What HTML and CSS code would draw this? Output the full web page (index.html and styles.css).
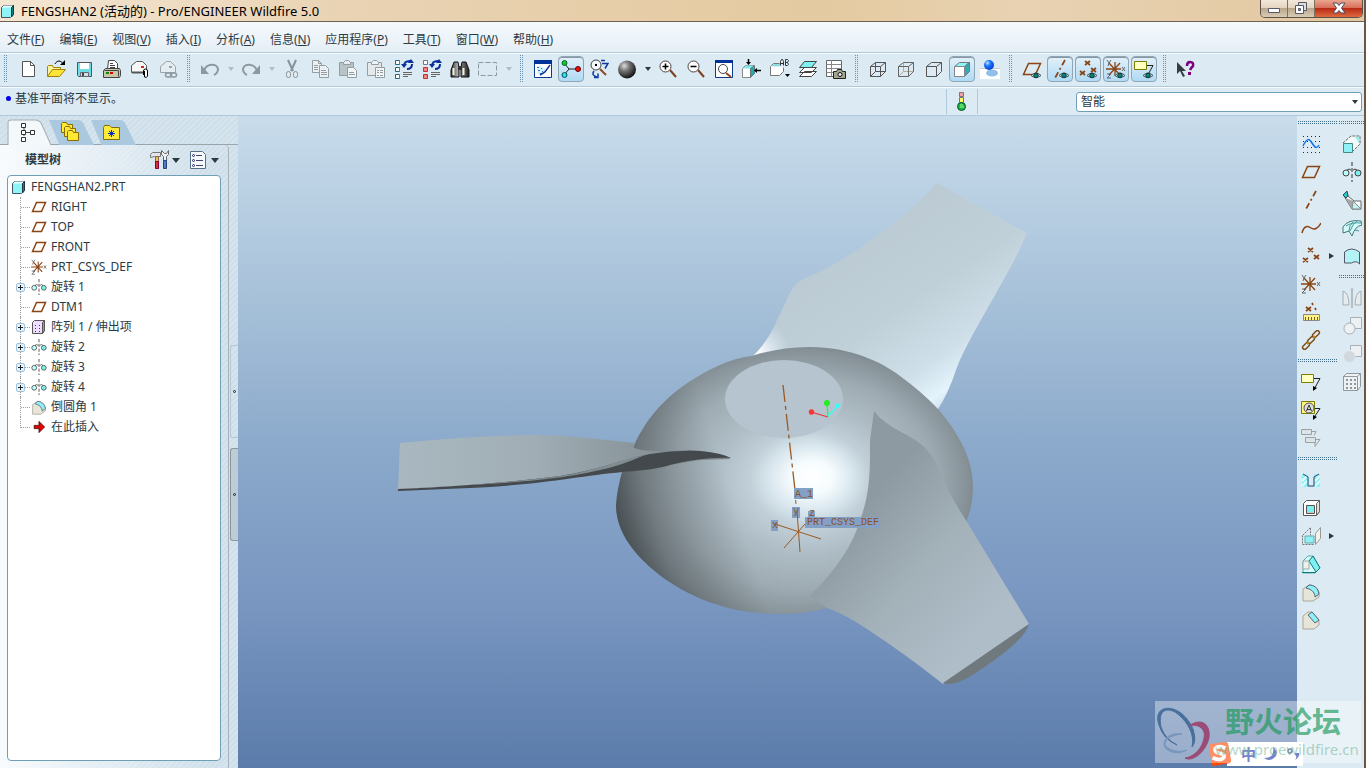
FILE: index.html
```html
<!DOCTYPE html>
<html lang="zh-CN">
<head>
<meta charset="utf-8">
<title>FENGSHAN2 (活动的) - Pro/ENGINEER Wildfire 5.0</title>
<link rel="stylesheet" href="styles.css">
</head>
<body>
<svg class="defs" width="0" height="0" aria-hidden="true">
<defs>
<linearGradient id="ball" x1="0" y1="0" x2="1" y2="0"><stop offset="0" stop-color="#333"/><stop offset=".35" stop-color="#aaa"/><stop offset="1" stop-color="#222"/></linearGradient>
<radialGradient id="sph" cx=".35" cy=".3" r=".7"><stop offset="0" stop-color="#ddd"/><stop offset=".4" stop-color="#777"/><stop offset="1" stop-color="#161616"/></radialGradient>
<radialGradient id="blueball" cx=".35" cy=".3" r=".7"><stop offset="0" stop-color="#cfe6ff"/><stop offset=".4" stop-color="#1f7bff"/><stop offset="1" stop-color="#0040d0"/></radialGradient>
<symbol id="cube" viewBox="0 0 16 16"><path d="M1.500 4.500l2-2h10v9l-3 3h-9z" fill="#8ff4f6" stroke="#456"/><path d="M2 4.500h9l2-2H4z" fill="#e9ffff"/><path d="M11.500 4.500v9.500l2-2.500v-9z" fill="#13888a" stroke="#234"/></symbol>
<symbol id="new" viewBox="0 0 20 20"><path d="M4.500 2.500h8l4 4v11h-12z" fill="#fff" stroke="#555"/><path d="M12.500 2.500v4h4" fill="none" stroke="#555"/></symbol>
<symbol id="open" viewBox="0 0 20 20"><path d="M1.500 17.500v-10l1-1h4l1 2h7v3" fill="#fdf39a" stroke="#a58100"/><path d="M1.500 17.500l5-7h13l-6 7z" fill="#ffe23a" stroke="#a58100"/><path d="M9 5c2-4 6-4 8 0" fill="none" stroke="#000"/><path d="M19 1v5h-5z"/></symbol>
<symbol id="save" viewBox="0 0 20 20"><path d="M3.500 3.500h14v14h-13l-1-1z" fill="#6fdde6" stroke="#555"/><path d="M6 4h9v6H6z" fill="#fff"/><path d="M6.500 13.500h8v4h-8z" fill="#d4dde0" stroke="#667"/><path d="M8 14h2v3H8z" fill="#444"/></symbol>
<symbol id="print" viewBox="0 0 20 20"><path d="M5.500 10.500l1-9h6l3 3v6z" fill="#fff" stroke="#444"/><path d="M8 4.500h3M8 6.500h5M8 8.500h5" stroke="#444"/><path d="M1.500 11.500l2-2h14l1 2v5l-1 2h-16z" fill="#c7c6a6" stroke="#444"/><path d="M2.500 11.500h14v6" fill="none" stroke="#444"/><path d="M4 13h3v2H4z" fill="#0a8a0a"/><path d="M8 13h3v2H8z" fill="#d00"/></symbol>
<symbol id="mail" viewBox="0 0 20 20"><path d="M1.500 13.500v-7l5-4h6l4 4v7z" fill="#f8f8f6" stroke="#555"/><path d="M2 13.500h13" stroke="#555" stroke-width="2"/><path d="M11 7h3v2h-3z" fill="#d22"/><path d="M13.500 16v-4a2 2 0 0 1 4 0v5a2 2 0 0 1-3 1l0-6" fill="#fff" stroke="#000"/></symbol>
<symbol id="maillink" viewBox="0 0 20 20"><path d="M2.500 13.500v-6l6-5h4l5 5v6z" fill="#e6edf1" stroke="#98a4aa"/><path d="M11 7h3v2h-3z" fill="#98a4aa"/><g fill="none" stroke="#8f999e" stroke-width="1.500"><rect x="7.500" y="14" width="6" height="4" rx="2"/><rect x="12.500" y="14" width="6" height="4" rx="2"/></g></symbol>
<symbol id="undo" viewBox="0 0 20 20"><path d="M4 12C6 4 17 4 18 10c0 3-2 5-4 6" fill="none" stroke="#8d999f" stroke-width="2"/><path d="M1 6v9h8z" fill="#8d999f"/></symbol>
<symbol id="redo" viewBox="0 0 20 20"><path d="M16 12C14 4 3 4 2 10c0 3 2 5 4 6" fill="none" stroke="#8d999f" stroke-width="2"/><path d="M19 6v9h-8z" fill="#8d999f"/></symbol>
<symbol id="cut" viewBox="0 0 20 20"><path d="M6 1l5 11M14 1L9 12" stroke="#87929a" stroke-width="2" fill="none"/><g fill="#e5eaec" stroke="#87929a"><rect x="4.500" y="12.500" width="4" height="6" rx="2"/><rect x="11.500" y="12.500" width="4" height="6" rx="2"/></g></symbol>
<symbol id="copy" viewBox="0 0 20 20"><g fill="#eaf0f3" stroke="#939da2"><path d="M2.500 1.500h6l3 3v9h-9zM8.500 1.500v3h3"/><path d="M9.500 6.500h6l3 3v9h-9z"/></g><path d="M4 6.500h4M4 8.500h4M4 10.500h4M11 11.500h5M11 13.500h6M11 15.500h6" stroke="#939da2"/></symbol>
<symbol id="paste" viewBox="0 0 20 20"><path d="M1.500 3.500h14v13h-14z" fill="#b8c3c8" stroke="#939da2"/><path d="M5.500 5.500v-2l2-2h3l2 2v2z" fill="#e6ecef" stroke="#939da2"/><path d="M9.500 8.500h6l3 3v7h-9z" fill="#f2f5f6" stroke="#939da2"/><path d="M11 13.500h5M11 15.500h6" stroke="#939da2"/></symbol>
<symbol id="pastesp" viewBox="0 0 20 20"><path d="M1.500 3.500h14v13h-14z" fill="#e4e9ec" stroke="#939da2"/><path d="M5.500 5.500v-2l2-2h3l2 2v2z" fill="#f0f4f5" stroke="#939da2"/><path d="M9.500 8.500h9v10h-9z" fill="#f2f5f6" stroke="#939da2"/><path d="M11 11.500h2M14 11.500h3M11 13.500h2M14 13.500h3M11 16.500h2M14 16.500h3" stroke="#939da2"/></symbol>
<symbol id="regen" viewBox="0 0 20 20"><path d="M1.500 1.500h4v4h-4zM1.500 8.500h4v4h-4zM1.500 15.500h4v4h-4z" fill="#fff" stroke="#267"/><path d="M5.500 2v3M5.500 9v3M5.500 16v3" stroke="#0aa"/><path d="M10 7c0-4 3-5 6-5M18 5c0 4-3 5-5 5" fill="none" stroke="#0a2f9e" stroke-width="2"/><path d="M7 5h6l-3 4zM14 4h6l-3-4z" fill="#0a2f9e"/><path d="M9 13.500h9M9 15.500h9M9 17.500h5" stroke="#666"/></symbol>
<symbol id="regen2" viewBox="0 0 20 20"><path d="M1.500 1.500h4v4h-4z" fill="#fff" stroke="#777"/><path d="M1.500 8.500h4v4h-4zM1.500 15.500h4v4h-4z" fill="#ff8080" stroke="#b33"/><path d="M10 7c0-4 3-5 6-5M18 5c0 4-3 5-5 5" fill="none" stroke="#0a2f9e" stroke-width="2"/><path d="M7 5h6l-3 4zM14 4h6l-3-4z" fill="#0a2f9e"/><path d="M9 13.500h9M9 15.500h9M9 17.500h5" stroke="#666"/></symbol>
<symbol id="find" viewBox="0 0 20 20"><path d="M4 3h4l1 6v9H1v-7zM12 3h4l3 8v7h-8V9z" fill="url(#ball)" stroke="#111"/><path d="M8 7h4v4H8z" fill="#333"/><path d="M3.500 9v7M13.500 9v7" stroke="#f4f4d8" stroke-width="2"/></symbol>
<symbol id="marquee" viewBox="0 0 20 20"><path d="M.5 3.500h18v13H.5z" fill="none" stroke="#8d999f" stroke-dasharray="5 2"/></symbol>
<symbol id="repaint" viewBox="0 0 20 20"><path d="M1.500 1.500h17v17h-17z" fill="#fff" stroke="#0b3a8c"/><path d="M1 1h18v4H1z" fill="#003399"/><path d="M4 7c4 0 8 1 9 5l-3 4-6-1z" fill="#d4f2fa"/><path d="M4 8.500h2M8 9.500h1M5 11.500h2M7 14.500h2M9 12.500h1" stroke="#2a6fd0"/><path d="M17 6l-5 7-5 3" stroke="#113c9c" stroke-width="1.500" fill="none"/></symbol>
<symbol id="spin" viewBox="0 0 20 20"><path d="M3 4l5 6-5 6M8 10h10" fill="none" stroke="#222"/><circle cx="3.500" cy="4" r="2.500" fill="#19c819" stroke="#064"/><circle cx="3.500" cy="16" r="2.500" fill="#2ee0ee" stroke="#055"/><circle cx="17" cy="10" r="2.500" fill="#e11" stroke="#600"/></symbol>
<symbol id="orient" viewBox="0 0 20 20"><path d="M11 10l6 6" stroke="#8b4a20" stroke-width="2"/><circle cx="7" cy="6" r="5" fill="#f3f8fa" stroke="#444"/><path d="M6 5h2v2H6z"/><path d="M12 1.500h4M13 4.500h6l-3 5M5 12c-2 3-1 5 3 6M5 18.500h4v-4" fill="none" stroke="#103a9e" stroke-width="1.500"/></symbol>
<symbol id="shade" viewBox="0 0 20 20"><circle cx="10" cy="10.500" r="9" fill="url(#sph)"/></symbol>
<symbol id="zin" viewBox="0 0 20 20"><path d="M12 11l6 7" stroke="#7e3f1c" stroke-width="2"/><circle cx="7.500" cy="7.500" r="5.500" fill="#fff" stroke="#444"/><path d="M7.500 4.500v6M4.500 7.500h6" stroke="#000" stroke-width="1.500"/></symbol>
<symbol id="zout" viewBox="0 0 20 20"><path d="M12 11l6 7" stroke="#7e3f1c" stroke-width="2"/><circle cx="7.500" cy="7.500" r="5.500" fill="#fff" stroke="#444"/><path d="M4.500 7.500h6" stroke="#000" stroke-width="1.500"/></symbol>
<symbol id="refit" viewBox="0 0 20 20"><path d="M1.500 1.500h17v17h-17z" fill="#fff" stroke="#0b3a8c"/><path d="M1 1h18v3H1z" fill="#003399"/><circle cx="9" cy="10" r="4.500" fill="#fff" stroke="#444"/><path d="M12 14l5 4" stroke="#8b4a20" stroke-width="2"/></symbol>
<symbol id="normal" viewBox="0 0 20 20"><path d="M.5 9.500l3-3h8v8l-3 4h-8z" fill="#fff" stroke="#888"/><path d="M1 9.500h8l2-3H4z" fill="#7ceaea"/><path d="M8.500 9.500v9l4-4v-8z" fill="#2aa" stroke="#677"/><path d="M6.500 0v5M19 11.500h-6" stroke="#000" stroke-width="1.500"/><path d="M4 3h5l-2.500 3zM15 9v5l-3-2.500z"/></symbol>
<symbol id="views" viewBox="0 0 20 20"><path d="M.5 7.500l3-3h6M.5 7.500v9h9l4-4v-4" fill="#fff" stroke="#777"/><path d="M1 7h8l2-2H4z" fill="#8dd"/><path d="M10.500 6.500v-4l1-2h1l1 2v4M11 4.500h2M15.500.5v6h2l1-1-1-2h-2M15.500.5h2l1 1-1 2" fill="none" stroke="#333"/><path d="M15 15h5l-2.500 3z"/></symbol>
<symbol id="layers" viewBox="0 0 20 20"><g stroke="#444" fill="#fff"><path d="M1.500 17.500l5-5h12l-5 5zM1.500 13.500l5-5h12l-5 5z"/><path d="M1.500 8.500l5-6h12l-5 6z" fill="#7ff0f0"/></g></symbol>
<symbol id="viewmgr" viewBox="0 0 20 20"><path d="M.5 1.500h15v16H.5z" fill="#fff" stroke="#666"/><path d="M.5 5.500h15M.5 9.500h15M.5 13.500h15M5.500 1v16" stroke="#888"/><path d="M7.500 12.500h3l1-2h4l1 2h3v7h-12z" fill="#a4a493" stroke="#222"/><circle cx="14" cy="15.500" r="2" fill="#eee" stroke="#111"/></symbol>
<symbol id="wire" viewBox="0 0 20 20"><path d="M2.500 7.500h10v10h-10zM7.500 3.500h10v9h-10zM2.500 7.500l5-4M12.500 7.500l5-4M12.500 17.500l5-5M2.500 17.500l5-5" fill="none" stroke="#555"/></symbol>
<symbol id="hidden" viewBox="0 0 20 20"><path d="M7.500 3.500v9h10M2.500 17.500l5-5" fill="none" stroke="#b5aca0"/><path d="M2.500 7.500h10v10h-10zM2.500 7.500l5-4h10v9l-5 5M12.500 7.500l5-4" fill="none" stroke="#666"/></symbol>
<symbol id="nohidden" viewBox="0 0 20 20"><path d="M2.500 7.500h10v10h-10zM2.500 7.500l5-4h10v9l-5 5M12.500 7.500l5-4" fill="none" stroke="#555"/></symbol>
<symbol id="shaded" viewBox="0 0 20 20"><path d="M2.500 7.500l5-4h10l-5 4z" fill="#8df5f5" stroke="#777"/><path d="M12.500 7.500l5-4v9l-5 5z" fill="#3aa9ad" stroke="#678"/><path d="M2.500 7.500h10v10h-10z" fill="#fff" stroke="#888"/></symbol>
<symbol id="enhanced" viewBox="0 0 20 20"><path d="M0 9h20v11H0z" fill="#fff"/><path d="M0 9.500h20" stroke="#ccc"/><ellipse cx="12" cy="14" rx="6" ry="3.500" fill="#8fbfe8"/><circle cx="9" cy="6" r="5" fill="url(#blueball)"/></symbol>
<symbol id="eye" viewBox="0 0 20 20"><path d="M9 16.500q5-5 10 0-5 4-10 0z" fill="#d5eef0" stroke="#455"/><circle cx="14" cy="16.500" r="2.300" fill="#078080" stroke="#133"/></symbol>
<symbol id="plane" viewBox="0 0 20 20"><path d="M6.500 4.500h12l-5 11h-12z" fill="none" stroke="#8a4413" stroke-width="1.500"/></symbol>
<symbol id="planes" viewBox="0 0 16 16"><path d="M5.500 3.500h9l-4 9h-9z" fill="none" stroke="#8a4413" stroke-width="1.500"/></symbol>
<symbol id="axis" viewBox="0 0 20 20"><path d="M15 1L5 19" stroke="#8a4413" stroke-width="1.700" stroke-dasharray="6 3 2 3"/></symbol>
<symbol id="points" viewBox="0 0 20 20"><path d="M7 2l5 4M12 2L7 6M2 12l5 4M7 12l-5 4M13 9l5 4M18 9l-5 4" stroke="#8a4413" stroke-width="1.700"/></symbol>
<symbol id="csys" viewBox="0 0 20 20"><path d="M9 3v14M0 10h15M3 4l11 12M14 4L3 16" stroke="#8a4413" stroke-width="1.300"/><path d="M1 1l2 3 2-3M3 4l-1 3M16 8l3 4M19 8l-3 4M1 15h4l-4 4h4" fill="none" stroke="#666"/></symbol>
<symbol id="note" viewBox="0 0 20 20"><path d="M.5 2.500h12v8H.5z" fill="#ffffc0" stroke="#7d7d00"/><path d="M13 6.500h6l-6 11" fill="none" stroke="#222"/><path d="M12 14v5l4-3z"/></symbol>
<symbol id="help" viewBox="0 0 20 20"><path d="M1 3v12l3-3 3 6 2-1-3-5h4z" fill="#333c41"/><path d="M11 7q0-4 3-4 4 0 3 4-2 2-3 4" fill="none" stroke="#800080" stroke-width="2.500"/><path d="M12 13h3v3h-3z" fill="#800080"/></symbol>
<symbol id="light" viewBox="0 0 20 20"><path d="M7.500.5h4v4h-4z" fill="#f3a0a0" stroke="#777"/><path d="M7.500 5.500h4v5h-4z" fill="#fff46a" stroke="#777"/><circle cx="9.500" cy="14.500" r="4" fill="#21b53c" stroke="#053"/><path d="M8 13h3M8 15h4" stroke="#9f9"/></symbol>
<symbol id="treetab" viewBox="0 0 20 20"><path d="M6 6v8M4 10.500h8" stroke="#444"/><g fill="#fff" stroke="#333"><path d="M3.500 1.500h4v4h-4zM3.500 8.500h4v4h-4zM3.500 15.500h4v4h-4zM12.500 8.500h4v4h-4z"/></g></symbol>
<symbol id="folders" viewBox="0 0 20 20"><g fill="#ffe933" stroke="#8a6d00"><path d="M1.500 10.500v-9l1-1h4l1 2h5v8z"/><path d="M4.500 14.500v-9l1-1h4l1 2h5v8z"/><path d="M7.500 18.500v-9l1-1h4l1 2h5v8z"/></g></symbol>
<symbol id="favs" viewBox="0 0 20 20"><path d="M1.500 17.500v-12l1-2h5l2 2h8v12z" fill="#ffea3c" stroke="#8a6d00"/><path d="M9.500 8v7M6 11.500h7M7 9l5 5M12 9l-5 5" stroke="#0a2fae"/></symbol>
<symbol id="tools" viewBox="0 0 20 20"><path d="M1.500 7.500v-3l2-2h8v4h-6z" fill="#dfe5e8" stroke="#777"/><path d="M6.500 6.500h3v6h-3z" fill="#e8c060" stroke="#864"/><path d="M6.500 11.500h3v7h-3z" fill="#d03434" stroke="#803"/><path d="M12.500.5v4l2 2v4h3v-4l2-2v-4l-2 3h-2z" fill="#eef2f4" stroke="#666"/><path d="M14.500 10.500h3v8h-3z" fill="#4d77cc" stroke="#247"/></symbol>
<symbol id="settings" viewBox="0 0 20 20"><path d="M2.500 1.500h12l3 3v14h-15z" fill="#f5faff" stroke="#55718a"/><path d="M8 5.500h6M8 10.500h7M8 15.500h7" stroke="#446"/><g fill="#fff" stroke="#226"><circle cx="5.500" cy="5.500" r="1"/><circle cx="5.500" cy="10.500" r="1"/><circle cx="5.500" cy="15.500" r="1"/></g></symbol>
<symbol id="revolve" viewBox="0 0 20 20"><path d="M10 0v20" stroke="#333" stroke-dasharray="4 2"/><circle cx="4" cy="11" r="3" fill="#bff" stroke="#444"/><circle cx="16" cy="11" r="3" fill="#7ff0f0" stroke="#444"/><path d="M5 8q2-2 4 0M11 8q2-2 4 0" fill="none" stroke="#444"/></symbol>
<symbol id="pattern" viewBox="0 0 16 16"><path d="M1.500 3.500l2-2h10v10l-2 3h-10z" fill="#efdcff" stroke="#555"/><path d="M11.500 3.500v11l2-3v-10z" fill="#b583d8" stroke="#555"/><path d="M4 6h1v1H4zM8 6h1v1H8zM4 9h1v1H4zM8 9h1v1H8zM4 12h1v1H4zM8 12h1v1H8z" fill="#80c"/></symbol>
<symbol id="round" viewBox="0 0 20 20"><path d="M2 7l6-4c5 0 9 3 10 8v4l-6 4H2z" fill="#e7e4d8" stroke="#aaa79b"/><path d="M8 3c5 0 9 3 10 9l-4 3c0-4-3-7-6-8l-3-1z" fill="#8ff0f5" stroke="#567"/></symbol>
<symbol id="chamfer" viewBox="0 0 20 20"><path d="M2 6l5-4h4l7 8v5l-5 4H2z" fill="#e7e4d8" stroke="#aaa79b"/><path d="M11 2l7 8-4 3-7-8z" fill="#8ff0f5" stroke="#567"/></symbol>
<symbol id="insert" viewBox="0 0 20 20"><path d="M4 8h6V3l7 7-7 7v-5H4z" fill="#e60000" stroke="#400"/></symbol>
<symbol id="sketch" viewBox="0 0 20 20"><path d="M2 2.500h18M2 7.500h18M2 13.500h18M2 18.500h18" stroke="#225" stroke-dasharray="1 3"/><path d="M2 12c4-8 6-8 9-3s5 6 7 2" fill="none" stroke="#1275e8" stroke-width="1.500"/></symbol>
<symbol id="curve" viewBox="0 0 20 20"><path d="M1 15c2-8 6-7 9-5s7 1 10-5" fill="none" stroke="#8a4413" stroke-width="1.500"/></symbol>
<symbol id="ruler" viewBox="0 0 20 20"><path d="M5 5l5 4M10 5L5 9M11 1l1 2M14 6l1 2" stroke="#8a4413" stroke-width="1.700"/><path d="M2.500 12.500h16v6h-16z" fill="#fff08a" stroke="#888"/><path d="M4.500 18v-3M7.500 18v-3M10.500 18v-3M13.500 18v-3M16.500 18v-3" stroke="#776600"/></symbol>
<symbol id="chain" viewBox="0 0 20 20"><g fill="none" stroke="#7a4a12" stroke-width="1.400"><rect x="13" y="0" width="4" height="8" rx="2" transform="rotate(45 15 4)"/><rect x="8" y="6" width="4" height="8" rx="2" transform="rotate(45 10 10)"/><rect x="3" y="12" width="4" height="8" rx="2" transform="rotate(45 5 16)"/></g><path d="M14 6l-2 2M8 12l-2 2" stroke="#b98a30" stroke-width="2"/></symbol>
<symbol id="note2" viewBox="0 0 20 20"><path d="M.5 1.500h13v12H.5z" fill="#fff27a" stroke="#7d7d00"/><circle cx="8" cy="8" r="5" fill="#ddd" stroke="#555"/><path d="M5.500 11l2.500-6 2.500 6M6 9.500h4" fill="none" stroke="#333"/><path d="M14 8.500h5l-6 9" fill="none" stroke="#222"/><path d="M12 15v5l4-3z"/></symbol>
<symbol id="note3" viewBox="0 0 20 20"><g fill="#dde4e8" stroke="#98a2a7"><path d="M.5 1.500h10v5H.5zM4.500 9.500h10v5h-10z"/><path d="M11 3.500h4l-2 4M15 11.500h4l-5 7v-4" fill="none"/></g></symbol>
<symbol id="hole" viewBox="0 0 20 20"><path d="M1 4h5l2 3v9h4V7l2-3h5v13H1z" fill="#8ff0f5"/><path d="M1 16l5-5M1 11l5-5M14 16l5-5M14 11l5-5" stroke="#dffcff" stroke-width="2"/><path d="M2 4l5 3v9h6V7l5-3" fill="none" stroke="#446"/></symbol>
<symbol id="shell" viewBox="0 0 20 20"><path d="M2.500 5.500l3-3h13v11l-3 4h-13z" fill="#fff" stroke="#555"/><path d="M15.500 5.500v12l3-4v-11z" fill="#e4dfd3" stroke="#666"/><path d="M5.500 7.500h8v8h-8z" fill="#cfc8bb" stroke="#555"/><path d="M7 8h6v6H7z" fill="#7ff0f0"/></symbol>
<symbol id="rib" viewBox="0 0 20 20"><path d="M14.500 18.500v-11l5-6v11z" fill="#f4f1e8" stroke="#999"/><path d="M1.500 9.500l8-8v8M1.500 9.500v9h12" fill="none" stroke="#777" stroke-dasharray="2 1"/><path d="M4 10h9v7H4z" fill="#8ff0f5" stroke="#6aa"/></symbol>
<symbol id="draft" viewBox="0 0 20 20"><path d="M2 7l5-5h5l7 12-5 5H2z" fill="#d9fafa" stroke="#5aa"/><path d="M12 2l7 12-4 4-7-11z" fill="#7ff0f4" stroke="#177"/><path d="M2 7h6v8H2z" fill="#eef0ea" stroke="#9aa"/><path d="M1 18.500h14" stroke="#177"/></symbol>
<symbol id="extrude" viewBox="0 0 20 20"><path d="M1 9l8-7h9v8l-8 8" fill="#f3fafa" stroke="#666" stroke-dasharray="3 1"/><path d="M13 3h4v6z" fill="#9ee"/><path d="M1.500 9.500h9v9h-9z" fill="#8ff0f5" stroke="#488"/></symbol>
<symbol id="sweep" viewBox="0 0 20 20"><path d="M5 2l1 4 6 5h7v8h-9L2 6z" fill="#fafaf8" stroke="#666"/><path d="M1 5l4-4 1 5-2 2z" fill="#2bc4c8" stroke="#255"/><path d="M4 8l7 3-1 8z" fill="#a8a8a8"/><path d="M11 11l8 8h-9z" fill="#bff3f3" stroke="#888"/></symbol>
<symbol id="boundary" viewBox="0 0 20 20"><path d="M1 9Q6 1 19 3l1 4q-7 1-10 11l-3-5-6 2z" fill="#d5fafa" stroke="#477"/><path d="M4 8q6-4 15-3M8 13q3-8 7-10M13 12l4 1M11 4q-4 3-4 9" fill="none" stroke="#499"/></symbol>
<symbol id="style" viewBox="0 0 20 20"><path d="M2.500 6q7-6 15 0v12q-3-4-8-1h-7z" fill="#b4f3f5" stroke="#556"/></symbol>
<symbol id="mirror" viewBox="0 0 20 20"><path d="M1 3q6 2 6 14H1zM19 3q-6 2-6 14h6z" fill="#e5ebee" stroke="#a5afb4"/><path d="M10 0v20" stroke="#a5afb4" stroke-width="1.500"/></symbol>
<symbol id="merge" viewBox="0 0 20 20"><path d="M8.500 1.500h11v11h-11z" fill="#edf1f3" stroke="#a5afb4"/><circle cx="7.500" cy="12.500" r="5.500" fill="#edf1f3" stroke="#a5afb4"/></symbol>
<symbol id="trim" viewBox="0 0 20 20"><path d="M8.500 6v-4.500h11v11h-6" fill="#edf1f3" stroke="#a5afb4"/><circle cx="7.500" cy="12.500" r="5.500" fill="#d2d9dd"/></symbol>
<symbol id="array" viewBox="0 0 20 20"><path d="M1.500 4.500l3-3h14v13l-3 4h-14z" fill="#eef1f3" stroke="#8f999e"/><path d="M15.500 4.500v14M15.500 4.500l3-3M1.500 4.500h14" stroke="#8f999e"/><path d="M4 8h10M4 12h10M4 16h10" stroke="#8f999e" stroke-width="2" stroke-dasharray="2 2"/></symbol>
</defs>
</svg>
<div class="window">
<header class="titlebar">
<svg class="ic"><use href="#cube"/></svg>
<h1>FENGSHAN2 (活动的) - Pro/ENGINEER Wildfire 5.0</h1>
<div class="winbtns">
<button aria-label="最小化"><svg viewBox="0 0 16 14"><path d="M2.500 7.500h11v4h-11z" fill="#fff" stroke="#555869"/></svg></button>
<button aria-label="还原"><svg viewBox="0 0 16 14"><path d="M5.500 1.500h8v8h-8z" fill="#ddd" stroke="#555869"/><path d="M2.500 4.500h8v8h-8z" fill="#fff" stroke="#555869"/><path d="M5.500 7.500h2v2h-2z" fill="#999" stroke="#555869"/></svg></button>
<button class="close" aria-label="关闭"><svg viewBox="0 0 16 14"><path d="M2 2h4l2 2.500L10 2h4l-3.500 5 3.500 5h-4L8 9.500 6 12H2l3.500-5z" fill="#fff" stroke="#4a4a5c"/></svg></button>
</div>
</header>
<nav class="menu">
<button>文件(<u>F</u>)</button><button>编辑(<u>E</u>)</button><button>视图(<u>V</u>)</button><button>插入(<u>I</u>)</button><button>分析(<u>A</u>)</button><button>信息(<u>N</u>)</button><button>应用程序(<u>P</u>)</button><button>工具(<u>T</u>)</button><button>窗口(<u>W</u>)</button><button>帮助(<u>H</u>)</button>
</nav>
<div class="toolbar">
<i class="grip"></i>
<button aria-label="新建"><svg class="ic"><use href="#new"/></svg></button>
<button aria-label="打开"><svg class="ic"><use href="#open"/></svg></button>
<button aria-label="保存"><svg class="ic"><use href="#save"/></svg></button>
<button aria-label="打印"><svg class="ic"><use href="#print"/></svg></button>
<button aria-label="邮件"><svg class="ic"><use href="#mail"/></svg></button>
<button aria-label="邮件链接"><svg class="ic"><use href="#maillink"/></svg></button>
<i class="grip"></i>
<button aria-label="撤销"><svg class="ic"><use href="#undo"/></svg></button>
<button class="drop off" aria-label="撤销列表"></button>
<button aria-label="重做"><svg class="ic"><use href="#redo"/></svg></button>
<button class="drop off" aria-label="重做列表"></button>
<button aria-label="剪切"><svg class="ic"><use href="#cut"/></svg></button>
<button aria-label="复制"><svg class="ic"><use href="#copy"/></svg></button>
<button aria-label="粘贴"><svg class="ic"><use href="#paste"/></svg></button>
<button aria-label="选择性粘贴"><svg class="ic"><use href="#pastesp"/></svg></button>
<button aria-label="再生"><svg class="ic"><use href="#regen"/></svg></button>
<button aria-label="再生管理器"><svg class="ic"><use href="#regen2"/></svg></button>
<button aria-label="查找"><svg class="ic"><use href="#find"/></svg></button>
<button aria-label="框选"><svg class="ic"><use href="#marquee"/></svg></button>
<button class="drop off" aria-label="框选列表"></button>
<i class="grip"></i>
<button aria-label="重画"><svg class="ic"><use href="#repaint"/></svg></button>
<button class="on" aria-label="旋转中心"><svg class="ic"><use href="#spin"/></svg></button>
<button aria-label="定向模式"><svg class="ic"><use href="#orient"/></svg></button>
<button aria-label="外观库"><svg class="ic"><use href="#shade"/></svg></button>
<button class="drop" aria-label="外观列表"></button>
<button aria-label="放大"><svg class="ic"><use href="#zin"/></svg></button>
<button aria-label="缩小"><svg class="ic"><use href="#zout"/></svg></button>
<button aria-label="重新调整"><svg class="ic"><use href="#refit"/></svg></button>
<button aria-label="重定向"><svg class="ic"><use href="#normal"/></svg></button>
<button aria-label="视图列表"><svg class="ic"><use href="#views"/></svg></button>
<button aria-label="层"><svg class="ic"><use href="#layers"/></svg></button>
<button aria-label="视图管理器"><svg class="ic"><use href="#viewmgr"/></svg></button>
<i class="grip"></i>
<button aria-label="线框"><svg class="ic"><use href="#wire"/></svg></button>
<button aria-label="隐藏线"><svg class="ic"><use href="#hidden"/></svg></button>
<button aria-label="无隐藏线"><svg class="ic"><use href="#nohidden"/></svg></button>
<button class="on" aria-label="着色"><svg class="ic"><use href="#shaded"/></svg></button>
<button aria-label="增强的真实感"><svg class="ic"><use href="#enhanced"/></svg></button>
<i class="grip"></i>
<button aria-label="平面显示"><svg class="ic"><use href="#plane"/><use href="#eye"/></svg></button>
<button class="on" aria-label="轴显示"><svg class="ic"><use href="#axis"/><use href="#eye"/></svg></button>
<button class="on" aria-label="点显示"><svg class="ic"><use href="#points"/><use href="#eye"/></svg></button>
<button class="on" aria-label="坐标系显示"><svg class="ic"><use href="#csys"/><use href="#eye"/></svg></button>
<button class="on" aria-label="注释显示"><svg class="ic"><use href="#note"/><use href="#eye"/></svg></button>
<i class="grip"></i>
<button aria-label="帮助"><svg class="ic"><use href="#help"/></svg></button>
</div>
<div class="status">
<p>基准平面将不显示。</p>
<span class="lightcell"><svg class="ic"><use href="#light"/></svg></span>
<label class="filter"><select aria-label="选择过滤器"><option>智能</option></select></label>
</div>
<main class="main">
<aside class="side">
<div class="tabs">
<button class="tab cur" aria-label="模型树"><svg class="tabbg" viewBox="0 0 44 27" preserveAspectRatio="none"><path d="M1 27V4q0-3 3-3h23q4 0 6 4l9 22" fill="#f3f8fb" stroke="#a5b0b5"/></svg><svg class="ic"><use href="#treetab"/></svg></button>
<button class="tab" aria-label="文件夹浏览器"><svg class="tabbg" viewBox="0 0 44 27" preserveAspectRatio="none"><path d="M0 1h28q3 0 5 4l10 22H10z" fill="#abc9de"/></svg><svg class="ic"><use href="#folders"/></svg></button>
<button class="tab" aria-label="收藏夹"><svg class="tabbg" viewBox="0 0 44 27" preserveAspectRatio="none"><path d="M0 1h28q3 0 5 4l10 22H10z" fill="#abc9de"/></svg><svg class="ic"><use href="#favs"/></svg></button>
</div>
<div class="sidebody">
<section class="panel">
<div class="panelhead"><h2>模型树</h2>
<button aria-label="设置"><svg class="ic"><use href="#tools"/></svg></button><button class="drop" aria-label="设置列表"></button>
<button aria-label="显示"><svg class="ic"><use href="#settings"/></svg></button><button class="drop" aria-label="显示列表"></button></div>
<div class="tree">
<div class="row root"><svg class="ic"><use href="#cube"/></svg>FENGSHAN2.PRT</div>
<ul>
<li class="row"><svg class="ic"><use href="#planes"/></svg>RIGHT</li>
<li class="row"><svg class="ic"><use href="#planes"/></svg>TOP</li>
<li class="row"><svg class="ic"><use href="#planes"/></svg>FRONT</li>
<li class="row"><svg class="ic"><use href="#csys"/></svg>PRT_CSYS_DEF</li>
<li class="row"><button class="exp" aria-label="展开"></button><svg class="ic"><use href="#revolve"/></svg>旋转 1</li>
<li class="row"><svg class="ic"><use href="#planes"/></svg>DTM1</li>
<li class="row"><button class="exp" aria-label="展开"></button><svg class="ic"><use href="#pattern"/></svg>阵列 1 / 伸出项</li>
<li class="row"><button class="exp" aria-label="展开"></button><svg class="ic"><use href="#revolve"/></svg>旋转 2</li>
<li class="row"><button class="exp" aria-label="展开"></button><svg class="ic"><use href="#revolve"/></svg>旋转 3</li>
<li class="row"><button class="exp" aria-label="展开"></button><svg class="ic"><use href="#revolve"/></svg>旋转 4</li>
<li class="row"><svg class="ic"><use href="#round"/></svg>倒圆角 1</li>
<li class="row"><svg class="ic"><use href="#insert"/></svg>在此插入</li>
</ul>
</div>
</section>
<div class="sash"><button aria-label="折叠"></button><button class="dark" aria-label="展开面板"></button></div>
</div>
</aside>
<section class="view">
<svg class="scene" viewBox="238 116 1059 652" preserveAspectRatio="xMidYMin slice">
<defs>
<radialGradient id="hub" gradientUnits="userSpaceOnUse" cx="0" cy="0" r="1" fx=".08" fy="-.06" gradientTransform="translate(798 486) scale(200 160)"><stop offset="0" stop-color="#fff"/><stop offset=".1" stop-color="#f6fcfe"/><stop offset=".2" stop-color="#dbe8ef"/><stop offset=".3" stop-color="#c0cfd8"/><stop offset=".45" stop-color="#afbdc6"/><stop offset=".66" stop-color="#9eabb2"/><stop offset=".84" stop-color="#859197"/><stop offset="1" stop-color="#636c71"/></radialGradient>
<linearGradient id="hubl" gradientUnits="userSpaceOnUse" x1="612" y1="528" x2="730" y2="490"><stop offset="0" stop-color="#363b3e" stop-opacity=".75"/><stop offset=".35" stop-color="#3c4144" stop-opacity=".35"/><stop offset="1" stop-color="#3c4144" stop-opacity="0"/></linearGradient>
<linearGradient id="b1" gradientUnits="userSpaceOnUse" x1="400" y1="0" x2="700" y2="0"><stop offset="0" stop-color="#a9b8c0"/><stop offset=".45" stop-color="#a0adb4"/><stop offset=".8" stop-color="#89959b"/><stop offset="1" stop-color="#7b858a"/></linearGradient>
<linearGradient id="b2" gradientUnits="userSpaceOnUse" x1="830" y1="220" x2="955" y2="405"><stop offset="0" stop-color="#b9c8d1"/><stop offset=".5" stop-color="#c0d0d9"/><stop offset=".78" stop-color="#cfdfe9"/><stop offset=".92" stop-color="#e4f4fd"/><stop offset="1" stop-color="#c9dae5"/></linearGradient>
<radialGradient id="b2w" gradientUnits="userSpaceOnUse" cx="758" cy="352" r="32"><stop offset="0" stop-color="#fff"/><stop offset="1" stop-color="#dceefa" stop-opacity="0"/></radialGradient>
<linearGradient id="b3" gradientUnits="userSpaceOnUse" x1="860" y1="510" x2="990" y2="620"><stop offset="0" stop-color="#8e9aa1"/><stop offset=".5" stop-color="#a3b1b9"/><stop offset="1" stop-color="#aebdc8"/></linearGradient>
</defs>
<path d="M937 183L1027 233Q1017 257 1000 286C980 322 963 350 956 370Q948 394 938 409L890 440 800 400 752 357Q768 342 777 320C788 300 790 285 803 279C835 267 875 239 900 218Q920 202 937 183z" fill="url(#b2)"/><path d="M752 357Q768 342 777 320L820 340 800 360z" fill="url(#b2w)"/>
<path d="M633 448C647 415 673 386 720 365Q735 358 752 356 780 347 810 347C850 347 882 362 900 376Q922 392 938 409C960 435 973 460 973 487Q973 506 966 522L900 600 827 608Q807 614 780 614C735 614 697 601 665 579C632 555 616 530 616 505Q617 490 622 472z" fill="url(#hub)"/>
<path d="M633 448C647 415 673 386 720 365Q735 358 752 356 780 347 810 347L827 608Q807 614 780 614C735 614 697 601 665 579C632 555 616 530 616 505Q617 490 622 472z" fill="url(#hubl)"/>
<ellipse cx="784" cy="399" rx="59" ry="39" fill="#b5c4cf"/>
<path d="M400 443Q470 436 530 435C570 435 605 440 635 443L633 447Q638 451 660 451L690 450Q716 451 731 459L700 460 640 470 540 482 398 490z" fill="url(#b1)"/>
<path d="M398 489Q480 486 560 476C595 471 620 460 650 454Q675 450 700 451Q722 453 731 458C710 457 690 460 670 465Q655 470 622 472C580 476 540 485 470 488L398 491z" fill="#43494c"/>
<path d="M398 489Q480 486 560 476C595 471 615 461 645 455Q620 466 600 470C570 477 540 481 470 485z" fill="#818c92"/>
<path d="M874 411Q882 422 903 433C925 444 934 455 940 472Q948 493 967 522L1029 624 943 684Q905 654 870 631Q845 614 827 608L810 596Q850 556 860 520C871 492 870 465 870 440z" fill="url(#b3)"/>
<path d="M1029 624L943 683Q955 688 983 668 1025 640 1029 624z" fill="#70797d"/>
<g stroke="#9a5a22" fill="none"><path d="M783 385L795 490" stroke-width="1.300" stroke-dasharray="17 4 4 4"/><path d="M795 494L796 504" stroke-dasharray="4 2"/></g>
<path d="M794 488h19v11h-19zM792 507h8v11h-8zM808 511h7v7h-7zM771 520h7v11h-7zM805 517h75v11h-75z" fill="#83a0c5"/>
<path d="M775 524L821 539M797 511L800 552M784 548L805 524" stroke="#9a5a22"/>
<g class="datum"><text x="795" y="497">A_1</text><text x="793" y="514">y</text><text x="809" y="516">z</text><text x="772" y="528">x</text><text x="807" y="525">PRT_CSYS_DEF</text></g>
<path d="M828 417L811 412" stroke="#f03030" stroke-width="1.300"/><path d="M828 417L827 403" stroke="#2f2" stroke-width="1.300"/><path d="M828 416L838 406" stroke="#3ff" stroke-width="1.300"/>
<circle cx="811.500" cy="412" r="2.700" fill="#f33"/><circle cx="827" cy="403" r="3" fill="#2e2"/><circle cx="838" cy="405.500" r="2.200" fill="#3ff"/>
</svg>
</section>
<aside class="rail">
<div class="col">
<i class="hgrip"></i>
<button aria-label="草绘"><svg class="ic"><use href="#sketch"/></svg></button>
<button aria-label="平面"><svg class="ic"><use href="#plane"/></svg></button>
<button aria-label="轴"><svg class="ic"><use href="#axis"/></svg></button>
<button aria-label="曲线"><svg class="ic"><use href="#curve"/></svg></button>
<button class="more" aria-label="点"><svg class="ic"><use href="#points"/></svg></button>
<button aria-label="坐标系"><svg class="ic"><use href="#csys"/></svg></button>
<button aria-label="分析特征"><svg class="ic"><use href="#ruler"/></svg></button>
<button aria-label="参照"><svg class="ic"><use href="#chain"/></svg></button>
<i class="hgrip"></i>
<button aria-label="注释"><svg class="ic"><use href="#note"/></svg></button>
<button aria-label="注释特征"><svg class="ic"><use href="#note2"/></svg></button>
<button aria-label="传播"><svg class="ic"><use href="#note3"/></svg></button>
<i class="hgrip"></i>
<button aria-label="孔"><svg class="ic"><use href="#hole"/></svg></button>
<button aria-label="壳"><svg class="ic"><use href="#shell"/></svg></button>
<button class="more" aria-label="筋"><svg class="ic"><use href="#rib"/></svg></button>
<button aria-label="拔模"><svg class="ic"><use href="#draft"/></svg></button>
<button aria-label="倒圆角"><svg class="ic"><use href="#round"/></svg></button>
<button aria-label="倒角"><svg class="ic"><use href="#chamfer"/></svg></button>
</div>
<div class="col two">
<i class="hgrip"></i>
<button aria-label="拉伸"><svg class="ic"><use href="#extrude"/></svg></button>
<button aria-label="旋转"><svg class="ic"><use href="#revolve"/></svg></button>
<button aria-label="扫描"><svg class="ic"><use href="#sweep"/></svg></button>
<button aria-label="边界混合"><svg class="ic"><use href="#boundary"/></svg></button>
<button aria-label="造型"><svg class="ic"><use href="#style"/></svg></button>
<i class="hgrip"></i>
<button aria-label="镜像"><svg class="ic"><use href="#mirror"/></svg></button>
<button aria-label="合并"><svg class="ic"><use href="#merge"/></svg></button>
<button aria-label="修剪"><svg class="ic"><use href="#trim"/></svg></button>
<button aria-label="阵列"><svg class="ic"><use href="#array"/></svg></button>
</div>
</aside>
</main>
<div class="ime">
<svg class="sogou" viewBox="0 0 28 28"><path d="M2 5q0-2 3-2L20 1q3 0 3 3l3 17q0 3-3 3L8 27q-3 0-3-3z" fill="#ff4a08"/><path d="M20 8q-7-4-11 0-2 4 4 5 7 1 5 5-3 4-12 0" fill="none" stroke="#fff" stroke-width="4"/></svg>
<span>中</span>
<svg class="moon" viewBox="0 0 14 14"><path d="M9 0q7 6 1 11-5 4-10 0 6 0 8-3 2-3 1-8z" fill="#2236a8"/></svg>
<svg class="moon" viewBox="0 0 14 14"><circle cx="4" cy="4" r="2" fill="none" stroke="#2236a8" stroke-width="1.500"/><path d="M9 6h4q1 4-4 7 2-3 1-4-1 0-1-3z" fill="#2236a8"/></svg>
</div>
<div class="mark">
<svg viewBox="0 0 60 62"><path d="M4 24C-4 2 26 0 38 28q4 12-1 18c3-12-4-24-13-32S2 6 6 26q4 12 16 18Q8 38 4 24z" fill="#2c5a8c" stroke="#2c5a8c"/><path d="M34 25c10-8 22-4 20 12-4 16-18 24-24 20 14-2 21-18 19-26-2-6-9-8-15-6z" fill="#9a2a5a" stroke="#9a2a5a"/><path d="M27 33c-18 2-22 12-10 16 8 3 15 0 15 0-10 6-24 1-23-7 2-8 10-10 18-9z" fill="#6b8eb8" stroke="#6b8eb8"/></svg>
<p><b>野火论坛</b><a href="#">www.proewildfire.cn</a></p>
</div>
</div>
</body>
</html>
```
FILE: styles.css
```css
* { box-sizing: border-box; }
body { margin: 0; font: 12px/20px "Noto Sans", "Noto Sans CJK SC", sans-serif; color: #2c3a42; overflow: hidden; }
button { border: 0; padding: 0; margin: 0; background: none; font: inherit; color: inherit; }
h1, h2, p, ul { margin: 0; padding: 0; font: inherit; list-style: none; }
.defs { display: block; }
.ic { width: 20px; height: 20px; flex: none; display: block; }
.window { position: relative; display: flex; flex-direction: column; height: 100vh; background: #dceaf3; border-right: 2px solid #6b5645; }
.titlebar { display: flex; align-items: center; height: 22px; background: linear-gradient(90deg, #f4e6d2, #e9d3b4 25%, #e4caa0 60%, #e8d2b2 75%, #e2c8a0); border-bottom: 1px solid #6f5f4f; color: #000; }
.titlebar .ic { width: 16px; height: 16px; margin-right: 5px; }
.titlebar h1 { flex: 1; white-space: nowrap; font-size: 13px; }
.winbtns { display: flex; align-self: flex-start; height: 18px; border: 1px solid #5c5048; border-top: 0; border-radius: 0 0 5px 5px; overflow: hidden; margin-right: 1px; }
.winbtns button { width: 27px; display: flex; justify-content: center; background: linear-gradient(#f2e8da, #e3d5bf 45%, #b9a78c 50%, #d9ccb4); border-right: 1px solid #7d7060; }
.winbtns .close { width: 47px; border: 0; background: linear-gradient(#e9a58f, #d8705a 45%, #b92b14 50%, #dd6a3f); }
.winbtns svg { width: 16px; height: 14px; margin-top: 1px; }
.menu { display: flex; align-items: center; gap: 15px; height: 31px; padding: 6px 7px 0; background: linear-gradient(#f4fafd, #e6eef6); border-bottom: 1px solid #b0c9da; white-space: nowrap; }
.toolbar { display: flex; align-items: center; gap: 2px; height: 34px; padding: 0 0 2px 4px; border-top: 1px solid #f8fcfe; border-bottom: 1px solid #b0c9da; }
.toolbar button { width: 26px; height: 26px; flex: none; display: flex; align-items: center; justify-content: center; }
.toolbar .on { border: 1px solid #8ea6b6; border-radius: 4px; background: linear-gradient(#e2f0f9, #b0daf5); box-shadow: inset 0 1px #8b979f; }
.grip { width: 3px; height: 28px; flex: none; margin: 0 5px 0 4px; background: conic-gradient(transparent 75%, #6c93ae 0) 0 0 / 2px 2px; }
.grip:first-child { margin: 0 6px 0 0; }
.toolbar .drop { width: 11px; }
.drop { width: 11px; height: 26px; display: flex; align-items: center; justify-content: center; }
.drop::after { content: ""; border: 3px solid transparent; border-top: 4px solid #2c3840; border-bottom: 0; }
.drop.off::after { border-top-color: #b1bcc3; }
.status { display: flex; align-items: center; height: 29px; border-top: 1px solid #f8fcfe; border-bottom: 1px solid #b0c9da; padding-right: 2px; }
.status p { flex: 1; padding: 0 0 6px 6px; display: flex; align-items: center; gap: 4px; }
.status p::before { content: ""; width: 5px; height: 5px; border-radius: 50%; background: #0000f0; }
.lightcell { width: 32px; height: 25px; display: flex; align-items: center; justify-content: center; border: 1px solid #b0c9da; border-width: 0 1px; }
.filter { width: 286px; margin-left: 98px; position: relative; }
.filter select { display: block; width: 100%; height: 20px; border: 1px solid #6d9fb8; border-radius: 3px; background: #fff; padding: 0 4px; font: inherit; line-height: 16px; appearance: none; color: #2c3a42; }
.filter::after { content: ""; position: absolute; right: 4px; top: 8px; border: 3px solid transparent; border-top: 4px solid #2c3840; border-bottom: 0; }
.main { flex: 1; display: flex; min-height: 0; }
.side { width: 238px; flex: none; display: flex; flex-direction: column; background: repeating-linear-gradient(135deg, #cfdfea 0 2px, #d5e4ee 2px 4px); padding-top: 3px; }
.tabs { display: flex; padding-left: 7px; height: 25px; }
.tab { position: relative; width: 42px; height: 25px; display: flex; align-items: center; padding-left: 11px; }
.tab.cur { z-index: 1; }
.tabbg { position: absolute; inset: 0 -4px 0 0; width: 46px; height: 26px; }
.tab .ic { position: relative; }
.sidebody { flex: 1; display: flex; min-height: 0; border-top: 1px solid #9aa5ab; }
.panel { flex: 1; display: flex; flex-direction: column; padding: 0 7px 7px; background: linear-gradient(90deg, #f8fbfd, rgba(248, 251, 253, 0) 90%); border-right: 1px solid #a7b2b8; border-radius: 0 4px 0 0; }
.panelhead { display: flex; align-items: center; height: 30px; }
.panelhead h2 { flex: 1; padding-left: 18px; font-weight: bold; }
.panelhead .drop { margin-left: 1px; }
.panelhead .drop + button { margin-left: 7px; }
.panelhead .drop + button + .drop { margin-right: 1px; }
.panelhead .drop::after { border-width: 5px 4px 0; }
.tree { flex: 1; background: #fff; border: 1px solid #6f9fb5; border-radius: 4px; padding-top: 1px; }
.row { display: flex; align-items: center; height: 20px; gap: 4px; padding-left: 23px; position: relative; white-space: nowrap; }
.row .ic { width: 16px; height: 16px; }
.row.root { padding-left: 3px; }
li.row::before { content: ""; position: absolute; left: 12px; top: 0; width: 10px; height: 20px; border-left: 1px dotted #96a0a5; background: repeating-linear-gradient(90deg, #96a0a5 0 1px, transparent 1px 2px) 0 10px / 10px 1px no-repeat; }
li.row:last-child::before { height: 11px; }
.exp { position: absolute; left: 8px; top: 6px; width: 9px; height: 9px; border: 1px solid #9fc3dc; border-radius: 2px; background: linear-gradient(#222, #222) center / 5px 1px no-repeat, linear-gradient(#222, #222) center / 1px 5px no-repeat, #e6f2fb; }
.sash { width: 9px; flex: none; padding-top: 200px; display: flex; flex-direction: column; gap: 10px; }
.sash button { width: 8px; height: 93px; margin-left: 1px; border: 1px solid #b3c9d8; border-right: 0; border-radius: 3px 0 0 3px; display: flex; align-items: center; justify-content: center; }
.sash button::after { content: ""; width: 1px; height: 1px; border-radius: 50%; border: 1px solid #222; }
.sash .dark { border-color: #8b979e; background: #bdcdd8; }
.view { flex: 1; position: relative; min-width: 0; background: linear-gradient(#c8dceb, #a1bcd6 33%, #8caacb 50%, #7896c0 75%, #5b7baa); }
.scene { position: absolute; inset: 0; width: 100%; height: 100%; }
.datum { font: 10px "Liberation Mono", monospace; fill: #8c5020; }
.rail { display: flex; gap: 1px; flex: none; padding: 5px 0 0 1px; background: #dceaf3; }
.col { width: 40px; display: flex; flex-direction: column; gap: 2px; }
.col.two { width: 25px; overflow: hidden; }
.col button { width: 26px; height: 26px; flex: none; display: flex; align-items: center; justify-content: center; position: relative; }
.hgrip { height: 3px; flex: none; margin: 4px 0 5px; background: conic-gradient(transparent 75%, #44708c 0) 0 0 / 2px 2px; }
.hgrip:first-child { margin: 0 0 5px; }
.more::after { content: ""; position: absolute; left: 31px; top: 10px; border: 3px solid transparent; border-left: 5px solid #2c3840; border-right: 0; }
.ime { position: absolute; right: 61px; bottom: 2px; height: 24px; display: flex; align-items: center; gap: 8px; background: linear-gradient(90deg, transparent 20px, #fff 20px); padding-right: 3px; }
.ime span { font: bold 15px/20px "Noto Sans CJK SC", sans-serif; color: #2236a8; }
.sogou { width: 26px; height: 26px; }
.moon { width: 14px; height: 14px; }
.mark { position: absolute; right: 3px; bottom: 5px; width: 206px; height: 62px; display: flex; background: rgba(255, 255, 255, .38); }
.mark svg { width: 60px; height: 62px; opacity: .75; }
.mark p { flex: 1; display: flex; flex-direction: column; color: rgba(20, 150, 85, .65); white-space: nowrap; }
.mark b { font: bold 29px/38px "Noto Sans CJK SC", sans-serif; padding-left: 10px; }
.mark a { font-size: 15px; line-height: 20px; color: rgba(110, 180, 150, .55); text-decoration: none; }
```
